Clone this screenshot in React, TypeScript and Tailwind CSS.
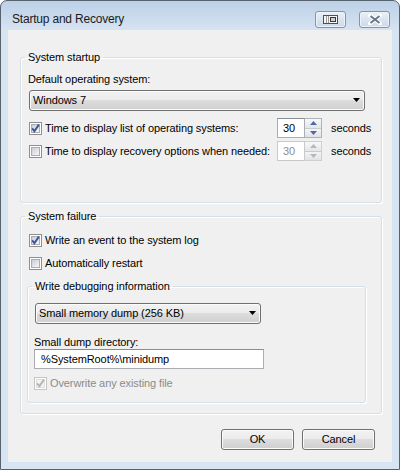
import type { ReactNode } from 'react';

function CheckBox({ checked = false, disabled = false }: { checked?: boolean; disabled?: boolean }) {
  return (
    <span
      className={`relative flex h-[13px] w-[13px] shrink-0 items-center justify-center border bg-white ${
        disabled ? 'border-[#c5c5c5]' : 'border-[#8e8f8f]'
      }`}
    >
      <span
        className={`h-[9px] w-[9px] border ${
          disabled
            ? 'border-[#dedede] bg-[#f3f3f3]'
            : 'border-[#a9aeb5] bg-gradient-to-br from-[#c9cdd3] to-[#f8f8f8]'
        }`}
      />
      {checked && (
        <svg className="absolute inset-0" width="11" height="11" viewBox="0 0 11 11">
          <path
            d="M2.2 5.4 L4.4 8.2 L8.9 1.6"
            fill="none"
            stroke={disabled ? '#b3b3b3' : '#3c5193'}
            strokeWidth="1.9"
          />
        </svg>
      )}
    </span>
  );
}

function Combo({ value, className }: { value: string; className: string }) {
  return (
    <div
      className={`flex h-[21px] items-center rounded-[3px] border border-[#707070] bg-[linear-gradient(#f2f2f2,#ebebeb_50%,#dddddd_50%,#cfcfcf)] pl-[3px] pr-[3px] shadow-[inset_0_0_0_1px_#fbfbfb] ${className}`}
    >
      <span className="flex-1">{value}</span>
      <svg width="8" height="5" viewBox="0 0 8 5">
        <path d="M0 0 H7 L3.5 4 Z" fill="#000" />
      </svg>
    </div>
  );
}

function Spinner({ value, disabled = false }: { value: string; disabled?: boolean }) {
  const arrow = disabled ? '#b8b8b8' : '#4d6aa8';
  return (
    <div className="flex h-[20px] w-[45px]">
      <div
        className={`flex flex-1 items-center border bg-white pl-[5px] ${
          disabled ? 'border-[#c9c9c9] bg-[#f4f4f4] text-[#8d8d8d]' : 'border-[#abadb3] border-t-[#8a8d94] text-black'
        }`}
      >
        {value}
      </div>
      <div
        className={`flex w-[17px] flex-col border-y border-r ${disabled ? 'border-[#cfcfcf]' : 'border-[#aeb2b8]'}`}
      >
        <div className="flex flex-1 items-center justify-center border-b border-[#c8ccd2] bg-gradient-to-b from-[#f8f8f8] to-[#e3e6ea]">
          <svg width="7" height="4" viewBox="0 0 7 4">
            <path d="M3.5 0 L7 4 H0 Z" fill={arrow} />
          </svg>
        </div>
        <div className="flex flex-1 items-center justify-center bg-gradient-to-b from-[#f4f4f4] to-[#e0e3e7]">
          <svg width="7" height="4" viewBox="0 0 7 4">
            <path d="M0 0 H7 L3.5 4 Z" fill={arrow} />
          </svg>
        </div>
      </div>
    </div>
  );
}

function Group({ title, className, children }: { title: string; className: string; children: ReactNode }) {
  return (
    <fieldset
      className={`rounded-[3px] border border-[#d5dfe5] shadow-[inset_1px_1px_0_#ffffff,1px_1px_0_#ffffff] ${className}`}
    >
      <legend className="ml-[4px] px-[3px] leading-[13px]">{title}</legend>
      {children}
    </fieldset>
  );
}

function DialogButton({ label }: { label: string }) {
  return (
    <button
      type="button"
      className="flex h-[21px] w-[73px] items-center justify-center rounded-[3px] border border-[#707070] bg-[linear-gradient(#f2f2f2,#ebebeb_50%,#dddddd_50%,#cfcfcf)] shadow-[inset_0_0_0_1px_#fbfbfb]"
    >
      {label}
    </button>
  );
}

export default function App() {
  return (
    <div className="h-[470px] w-[400px] bg-white font-['Liberation_Sans',Arial,sans-serif] text-[11px] leading-[13px] tracking-[-0.1px] text-black">
      <div className="flex h-full flex-col rounded-t-[7px] border border-[#57626f] bg-[linear-gradient(#bcd0e7,#d7e4f2_30px,#d7e4f2)]">
        {/* title bar */}
        <div className="flex h-[29px] items-start pl-[11px] pr-[9px] pt-[10px]">
          <span className="flex-1 text-[12px] leading-[16px] tracking-[-0.2px] text-[#1b1b1b]">Startup and Recovery</span>
          <div className="flex h-[17px] w-[31px] items-center justify-center rounded-[3px] border border-[#8394aa] bg-gradient-to-b from-[#e9f0f8] to-[#cbd9e9] shadow-[inset_0_0_0_1px_#eef3f9]">
            <svg width="15" height="9" viewBox="0 0 15 9">
              <rect x="0.5" y="0.5" width="14" height="8" fill="#f6f6f6" stroke="#505050" />
              <path d="M3.5 1 V8 M5.5 1 V8" stroke="#9a9a9a" />
              <rect x="7.5" y="2.5" width="5" height="4" fill="#cfcfcf" stroke="#3a3a3a" />
            </svg>
          </div>
          <div className="ml-[13px] flex h-[17px] w-[31px] items-center justify-center rounded-[3px] border border-[#8394aa] bg-gradient-to-b from-[#e9f0f8] to-[#cbd9e9] shadow-[inset_0_0_0_1px_#eef3f9]">
            <svg width="14" height="11" viewBox="0 0 14 11">
              <path d="M2 1.5 L12 9.5 M12 1.5 L2 9.5" stroke="#ffffff" strokeWidth="4" strokeLinecap="round" />
              <path d="M2.5 2 L11.5 9 M11.5 2 L2.5 9" stroke="#6a778a" strokeWidth="2" />
            </svg>
          </div>
        </div>

        {/* client area */}
        <div className="mx-[7px] mb-[7px] flex flex-1 flex-col bg-[#f0f0f0] pl-[12px] pr-[10px] pt-[21px]">
          <Group title="System startup" className="pb-[41px]">
            <div className="ml-[7px] mt-[9px]">Default operating system:</div>
            <Combo value="Windows 7" className="ml-[8px] mr-[16px] mt-[4px]" />
            <div className="ml-[8px] mt-[7px] flex h-[20px] items-center">
              <div className="flex w-[248px] items-center">
                <CheckBox checked />
                <span className="ml-[3px]">Time to display list of operating systems:</span>
              </div>
              <Spinner value="30" />
              <span className="ml-[9px]">seconds</span>
            </div>
            <div className="ml-[8px] mt-[3px] flex h-[20px] items-center">
              <div className="flex w-[248px] items-center">
                <CheckBox />
                <span className="ml-[3px]">Time to display recovery options when needed:</span>
              </div>
              <Spinner value="30" disabled />
              <span className="ml-[9px]">seconds</span>
            </div>
          </Group>

          <Group title="System failure" className="mt-[7px] pb-[10px]">
            <div className="ml-[8px] mt-[11px] flex items-center">
              <CheckBox checked />
              <span className="ml-[3px]">Write an event to the system log</span>
            </div>
            <div className="ml-[8px] mt-[10px] flex items-center">
              <CheckBox />
              <span className="ml-[3px]">Automatically restart</span>
            </div>
            <Group title="Write debugging information" className="ml-[6px] mt-[10px] w-[339px] pb-[12px]">
              <Combo value="Small memory dump (256 KB)" className="ml-[7px] mt-[10px] w-[226px]" />
              <div className="ml-[6px] mt-[12px]">Small dump directory:</div>
              <div className="ml-[6px] flex h-[20px] w-[230px] items-center border border-[#abadb3] border-t-[#8a8d94] bg-white pl-[6px]">
                %SystemRoot%\minidump
              </div>
              <div className="ml-[6px] mt-[8px] flex items-center text-[#8b8b8b]">
                <CheckBox checked disabled />
                <span className="ml-[3px]">Overwrite any existing file</span>
              </div>
            </Group>
          </Group>

          <div className="mt-[15px] flex justify-end gap-[8px] pr-[7px]">
            <DialogButton label="OK" />
            <DialogButton label="Cancel" />
          </div>
        </div>
      </div>
    </div>
  );
}
